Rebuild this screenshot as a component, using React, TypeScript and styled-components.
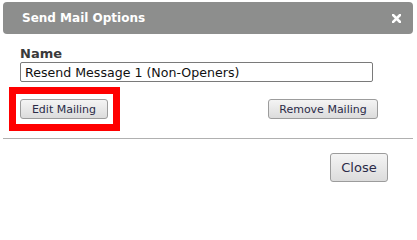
import React from "react";
import styled, { createGlobalStyle } from "styled-components";

const Global = createGlobalStyle`
  html, body { margin: 0; padding: 0; background: #ffffff; }
  body { font-family: "DejaVu Sans", Verdana, sans-serif; }
`;

const Dialog = styled.div`
  width: 417px;
  height: 201px;
  box-sizing: border-box;
  padding: 2px 4px 0 3px;
  background: #ffffff;
  display: flex;
  flex-direction: column;
  overflow: hidden;
`;

const TitleBar = styled.div`
  height: 32px;
  background: #8d8e8d;
  border-radius: 4px;
  display: flex;
  align-items: center;
  justify-content: space-between;
  padding: 0 12px 0 19px;
  color: #ffffff;
`;

const Title = styled.span`
  font-size: 12px;
  font-weight: bold;
`;

const CloseX = styled.button`
  border: none;
  background: none;
  padding: 0;
  width: 10px;
  height: 10px;
  display: flex;
  align-items: center;
  justify-content: center;
  cursor: pointer;
`;

const Body = styled.div`
  padding: 12px 38px 0 17px;
  display: flex;
  flex-direction: column;
`;

const Label = styled.label`
  font-size: 13px;
  font-weight: bold;
  color: #3a3a3a;
  line-height: 15px;
  margin-bottom: 1px;
`;

const TextInput = styled.input`
  box-sizing: border-box;
  height: 20px;
  width: 353px;
  border: 1px solid #7a7a7a;
  border-radius: 2px;
  padding: 0 4px;
  font-family: "DejaVu Sans", Verdana, sans-serif;
  font-size: 12.6px;
  color: #111111;
  background: #ffffff;
  outline: none;
`;

const ButtonRow = styled.div`
  display: flex;
  align-items: center;
  justify-content: space-between;
  margin-top: 5px;
  width: 358px;
`;

const Highlight = styled.div`
  border: 7px solid #ff0000;
  padding: 5px 5px 5px 4px;
  margin-left: -11px;
  display: flex;
`;

const Button = styled.button<{ $w: number; $h: number; $fs: number }>`
  box-sizing: border-box;
  width: ${(p) => p.$w}px;
  height: ${(p) => p.$h}px;
  border: 1px solid #9c9c9c;
  border-radius: 3px;
  background: linear-gradient(#f4f4f4, #dcdcdc);
  font-family: "DejaVu Sans", Verdana, sans-serif;
  font-size: ${(p) => p.$fs}px;
  color: #2b2b48;
  padding: 0;
  display: flex;
  align-items: center;
  justify-content: center;
  cursor: pointer;
`;

const Separator = styled.hr`
  border: none;
  border-top: 1px solid #b0b0b0;
  margin: 7px 0 0 0;
  height: 0;
`;

const Footer = styled.div`
  display: flex;
  justify-content: flex-end;
  padding: 14px 25px 0 0;
`;

export default function App() {
  return (
    <>
      <Global />
      <Dialog>
        <TitleBar>
          <Title>Send Mail Options</Title>
          <CloseX aria-label="close">
            <svg width="9" height="9" viewBox="0 0 9 9">
              <path d="M1 1 L8 8 M8 1 L1 8" stroke="#ffffff" strokeWidth="2.6" strokeLinecap="square" />
            </svg>
          </CloseX>
        </TitleBar>
        <Body>
          <Label>Name</Label>
          <TextInput defaultValue="Resend Message 1 (Non-Openers)" />
          <ButtonRow>
            <Highlight>
              <Button $w={88} $h={20} $fs={11}>Edit Mailing</Button>
            </Highlight>
            <Button $w={110} $h={20} $fs={11}>Remove Mailing</Button>
          </ButtonRow>
        </Body>
        <Separator />
        <Footer>
          <Button $w={58} $h={29} $fs={13}>Close</Button>
        </Footer>
      </Dialog>
    </>
  );
}
